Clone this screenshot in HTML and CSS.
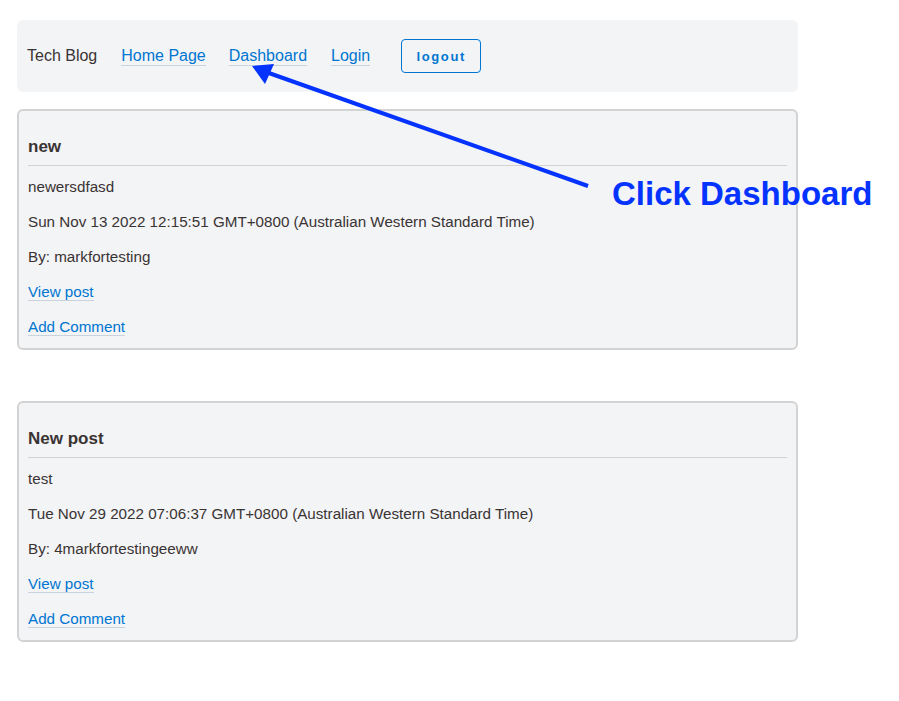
FILE: index.html
```html
<!DOCTYPE html>
<html lang="en">
<head>
<meta charset="utf-8">
<title>Tech Blog</title>
<link rel="stylesheet" href="styles.css">
</head>
<body>
<div class="page">
  <nav class="nav">
    <span class="brand">Tech Blog</span>
    <a class="link" href="#">Home Page</a>
    <a class="link" href="#">Dashboard</a>
    <a class="link" href="#">Login</a>
    <button class="btn">logout</button>
  </nav>

  <article class="card">
    <h2 class="title">new</h2>
    <hr class="rule">
    <p class="line">newersdfasd</p>
    <p class="line">Sun Nov 13 2022 12:15:51 GMT+0800 (Australian Western Standard Time)</p>
    <p class="line">By: markfortesting</p>
    <p class="line"><a class="link" href="#">View post</a></p>
    <p class="line"><a class="link" href="#">Add Comment</a></p>
  </article>

  <article class="card">
    <h2 class="title">New post</h2>
    <hr class="rule">
    <p class="line">test</p>
    <p class="line">Tue Nov 29 2022 07:06:37 GMT+0800 (Australian Western Standard Time)</p>
    <p class="line">By: 4markfortestingeeww</p>
    <p class="line"><a class="link" href="#">View post</a></p>
    <p class="line"><a class="link" href="#">Add Comment</a></p>
  </article>
</div>

<svg class="arrow" width="899" height="701" viewBox="0 0 899 701">
  <line x1="588" y1="186" x2="266" y2="72" stroke="#0433ff" stroke-width="4" />
  <polygon points="252,66 274,64 265,84" fill="#0433ff" />
</svg>
<div class="note">Click Dashboard</div>
</body>
</html>
```

FILE: styles.css
```css
* { box-sizing: border-box; }

html, body {
  margin: 0;
  padding: 0;
  background: #ffffff;
}

body {
  font-family: "Liberation Sans", Arial, Helvetica, sans-serif;
  color: #3a3333;
  position: relative;
  width: 899px;
  height: 701px;
  overflow: hidden;
}

.page {
  padding: 20px 0 0 17px;
  width: 798px;
}

.nav {
  display: flex;
  align-items: center;
  height: 72px;
  padding: 0 0 0 10px;
  background: #f3f4f6;
  border-radius: 6px;
  font-size: 16px;
  gap: 23px;
}

.brand {
  color: #3a3333;
  margin-right: 1px;
}

.link {
  color: #0076d1;
  text-decoration: none;
  border-bottom: 1px solid #c9d2dd;
  line-height: 18px;
}

.nav .link + .link + .link { margin-left: 1px; }

.btn {
  margin-left: 8px;
  width: 80px;
  height: 34px;
  border: 1px solid #0076d1;
  border-radius: 4px;
  background: transparent;
  color: #0076d1;
  font-family: "Liberation Sans", Arial, sans-serif;
  font-weight: bold;
  font-size: 13px;
  letter-spacing: 1.6px;
  padding: 0;
}

.card {
  margin-top: 17px;
  margin-bottom: 51px;
  background: #f3f4f6;
  border: 2px solid #d3d3d3;
  border-radius: 6px;
  padding: 0 9px 11px 9px;
}

.card + .card { margin-top: 0; }

.title {
  margin: 26px 0 8px 0;
  font-size: 17px;
  line-height: 20px;
  font-weight: bold;
  color: #3a3333;
}

.rule {
  margin: 0;
  border: 0;
  height: 1px;
  background: #d3d3d3;
}

.line {
  margin: 15px 0 0 0;
  font-size: 15.2px;
  line-height: 20px;
}

.rule + .line { margin-top: 11px; }

.arrow {
  position: absolute;
  left: 0;
  top: 0;
  pointer-events: none;
}

.note {
  position: absolute;
  left: 612px;
  top: 175px;
  font-family: "Liberation Sans", Arial, sans-serif;
  font-weight: bold;
  font-size: 33px;
  line-height: 38px;
  color: #0433ff;
  white-space: nowrap;
}
```
